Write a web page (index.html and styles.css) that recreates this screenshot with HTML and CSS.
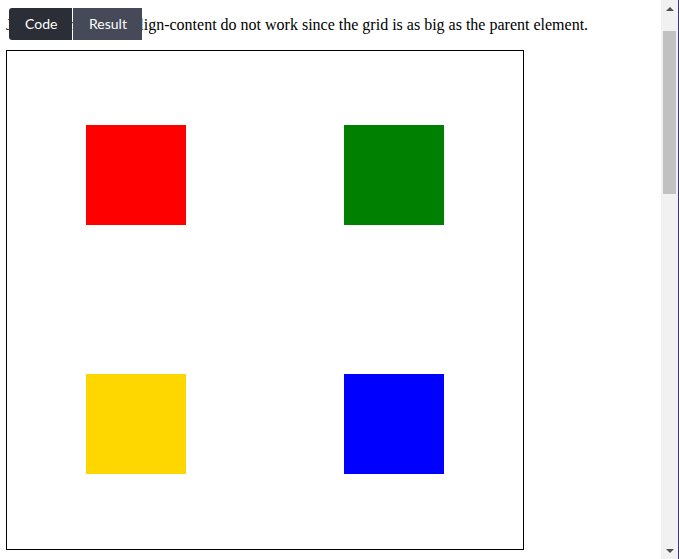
FILE: index.html
```html
<!DOCTYPE html>
<html>
<head>
<meta charset="utf-8">
<link rel="stylesheet" href="styles.css">
</head>
<body>
<div class="frame">
  <main class="page">
    <p class="intro">Justify-content and align-content do not work since the grid is as big as the parent element.</p>
    <div class="grid">
      <div class="item red"></div>
      <div class="item green"></div>
      <div class="item yellow"></div>
      <div class="item blue"></div>
    </div>
  </main>
  <div class="scrollbar">
    <div class="arrow up"></div>
    <div class="track"><div class="thumb"></div></div>
    <div class="arrow down"></div>
  </div>
</div>
<div class="tabs">
  <span class="tab code">Code</span>
  <span class="tab result">Result</span>
</div>
</body>
</html>
```
FILE: styles.css
```css
html, body {
  margin: 0;
  padding: 0;
  height: 100%;
  overflow: hidden;
  background: #fff;
}
.frame {
  display: flex;
  height: 559px;
}
.page {
  flex: 1;
  padding: 0 6px;
  font-family: "Liberation Serif", "Times New Roman", serif;
  font-size: 16px;
  color: #000;
}
.intro {
  margin: 16px 0;
  line-height: 18px;
  white-space: nowrap;
}
.grid {
  box-sizing: border-box;
  width: 518px;
  height: 500px;
  border: 1px solid #000;
  display: grid;
  grid-template-columns: 258px 258px;
  grid-template-rows: 248px 250px;
  place-items: center;
}
.item {
  width: 100px;
  height: 100px;
}
.red { background: #ff0000; }
.green { background: #008000; }
.yellow { background: #ffd700; }
.blue { background: #0000ff; }

.scrollbar {
  width: 17px;
  border-right: 1px solid #3b3a6b;
  background: #f1f1f1;
  display: flex;
  flex-direction: column;
}
.arrow {
  height: 17px;
  display: flex;
  align-items: center;
  justify-content: center;
}
.arrow::before {
  content: "";
  width: 0;
  height: 0;
  border-left: 4px solid transparent;
  border-right: 4px solid transparent;
}
.up::before { border-bottom: 4px solid #505050; }
.down::before { border-top: 4px solid #505050; }
.track {
  flex: 1;
  padding-top: 14px;
}
.thumb {
  margin: 0 2px;
  height: 163px;
  background: #c1c1c1;
}

.tabs {
  position: absolute;
  top: 8px;
  left: 9px;
  display: flex;
  gap: 1px;
  font-family: Lato, "Liberation Sans", sans-serif;
  font-size: 14px;
  color: #fff;
}
.tab {
  height: 32px;
  line-height: 32px;
  padding: 0 16px;
}
.code {
  background: #2b2e37;
  border-radius: 3px 0 0 3px;
  width: 31px;
}
.result {
  background: #464957;
  padding: 0 15px 0 16px;
}
```
